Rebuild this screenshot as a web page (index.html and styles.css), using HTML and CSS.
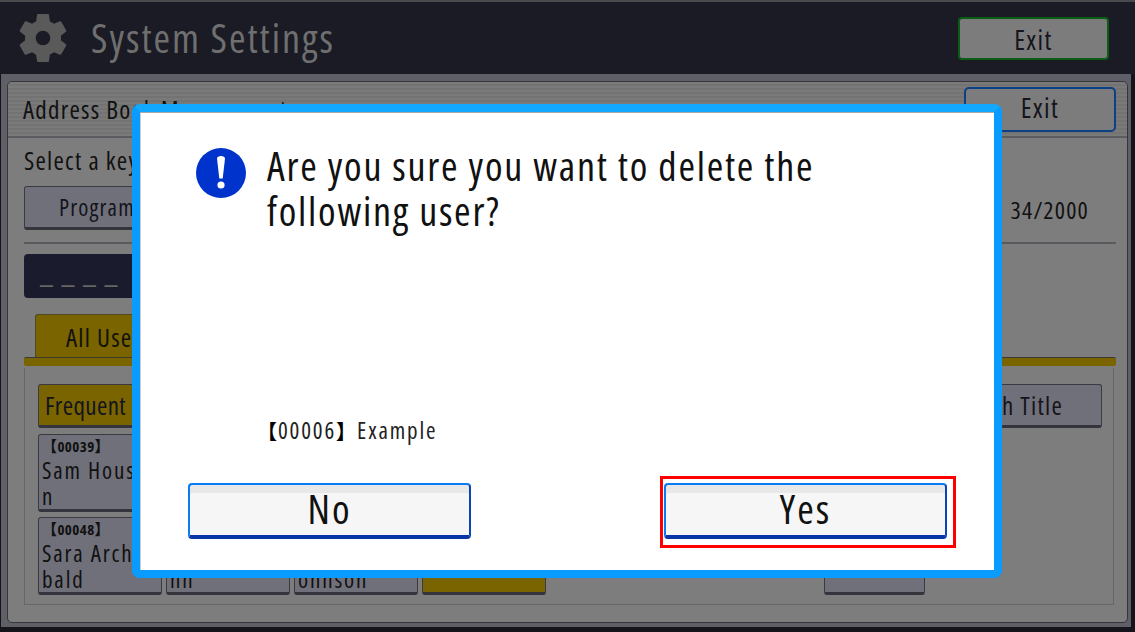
FILE: index.html
```html
<!DOCTYPE html>
<html lang="en">
<head>
  <meta charset="UTF-8">
  <title>System Settings</title>
  <link rel="stylesheet" href="styles.css">
</head>
<body>

  <header class="topbar">
    <svg class="gear" viewBox="0 0 24 24"><path fill-rule="evenodd" d="M19.14 12.94c.04-.3.06-.61.06-.94 0-.32-.02-.64-.07-.94l2.03-1.58c.18-.14.23-.41.12-.61l-1.92-3.32c-.12-.22-.37-.29-.59-.22l-2.39.96c-.5-.38-1.03-.7-1.62-.94l-.36-2.54c-.04-.24-.24-.41-.48-.41h-3.84c-.24 0-.43.17-.47.41l-.36 2.54c-.59.24-1.13.57-1.62.94l-2.39-.96c-.22-.08-.47 0-.59.22L2.74 8.87c-.12.21-.08.47.12.61l2.03 1.58c-.05.3-.09.63-.09.94s.02.64.07.94l-2.03 1.58c-.18.14-.23.41-.12.61l1.92 3.32c.12.22.37.29.59.22l2.39-.96c.5.38 1.03.7 1.62.94l.36 2.54c.05.24.24.41.48.41h3.84c.24 0 .44-.17.47-.41l.36-2.54c.59-.24 1.13-.56 1.62-.94l2.39.96c.22.08.47 0 .59-.22l1.92-3.32c.12-.22.07-.47-.12-.61l-2.01-1.58zM12 14.9c-1.6 0-2.9-1.3-2.9-2.9s1.3-2.9 2.9-2.9 2.9 1.3 2.9 2.9-1.3 2.9-2.9 2.9z"/></svg>
    <span class="app-title">System Settings</span>
    <button class="btn exit-top">Exit</button>
  </header>

  <div class="frame">
    <main class="panel">
      <div class="panel-head">
        <span>Address Book Management</span>
        <button class="btn exit-blue">Exit</button>
      </div>

      <div class="panel-body">
        <p class="hint">Select a key</p>
        <div class="program-row">
          <button class="btn program">Program</button>
          <span class="counter">34/2000</span>
        </div>
        <div class="rule"></div>
        <div class="search">_ _ _ _</div>

        <div class="tabs"><span class="tab">All Users</span></div>
        <div class="tab-line"></div>

        <section class="list-box">
          <div class="list-top">
            <button class="btn frequent">Frequent</button>
            <button class="btn search-title">Search Title</button>
          </div>
          <div class="list-row">
            <div class="cards">
              <div class="card"><b>【00039】</b>Sam Housto<br>n</div>
              <div class="card"></div>
              <div class="card"></div>
              <div class="card"></div>
              <div class="card"><b>【00048】</b>Sara Archi<br>bald</div>
              <div class="card"><b></b><br>nn</div>
              <div class="card"><b></b><br>ohnson</div>
              <div class="card card-on"></div>
            </div>
            <button class="btn page-btn"></button>
          </div>
        </section>
      </div>
    </main>
  </div>

  <div class="dialog">
    <div class="dialog-msg">
      <svg class="alert" viewBox="0 0 50 50">
        <circle cx="25" cy="25" r="25" fill="#0033cc"/>
        <path d="M21 10.5c0-1.6 1.6-2.5 4-2.5s4 .9 4 2.5l-2.3 20h-3.4z" fill="#fff"/>
        <circle cx="25" cy="37" r="3.6" fill="#fff"/>
      </svg>
      <p>Are you sure you want to delete the<br>following user?</p>
    </div>
    <p class="dialog-user"><span class="bracket">【</span>00006<span class="bracket">】</span>Example</p>
    <div class="dialog-actions">
      <button class="dlg-btn dlg-no">No</button>
      <div class="yes-wrap"><button class="dlg-btn">Yes</button></div>
    </div>
  </div>

</body>
</html>
```

FILE: styles.css
```css
html, body {
  margin: 0;
  height: 632px;
  overflow: hidden;
}

body {
  position: relative;
  background: #14141a;
  font-family: "Open Sans", "Noto Sans CJK JP", sans-serif;
  font-stretch: 75%;
  color: #111;
}

/* the panel font is narrow but widely spaced */
body * {
  letter-spacing: .05em;
}

p {
  margin: 0;
}

.btn {
  display: block;
  padding: 0;
  font: inherit;
  color: #14141c;
  background: #70707a;
  border: 1px solid #3a3a42;
  border-bottom: 3px solid #34343c;
  border-radius: 3px;
}

/* top bar */
.topbar {
  box-sizing: border-box;
  height: 74px;
  display: flex;
  align-items: center;
  background: #1a1b24;
  border-top: 2px solid #4a4a4e;
  padding: 0 26px 0 13px;
}

.gear {
  width: 60px;
  height: 60px;
  fill: #5a5a5a;
}

.app-title {
  margin-left: 18px;
  padding-bottom: 2px;
  font-size: 40px;
  color: #6f6f6f;
}

.exit-top {
  margin-left: auto;
  width: 151px;
  height: 43px;
  padding-top: 3px;
  font-size: 27px;
  line-height: 36px;
  background: #7c7c7c;
  border: 2px solid #0b5c14;
  border-radius: 4px;
}

/* main panel */
.frame {
  box-sizing: border-box;
  height: 553px;
  margin: 0 4px 0 1px;
  padding: 7px 3px 4px 6px;
  background: #5f5f68;
}

.panel {
  box-sizing: border-box;
  height: 542px;
  background: #7d7d7d;
  border: 1px solid #35353a;
  border-radius: 5px;
  font-size: 25px;
}

.panel-head {
  box-sizing: border-box;
  height: 56px;
  display: flex;
  align-items: center;
  justify-content: space-between;
  padding: 0 11px 0 15px;
  border-bottom: 2px solid #5c5c60;
  background: repeating-linear-gradient(#7a7a7a 0 2px, #737373 2px 4px);
  border-radius: 5px 5px 0 0;
}

.exit-blue {
  width: 152px;
  height: 45px;
  padding-bottom: 3px;
  font-size: 27px;
  line-height: 36px;
  background: #7c7c7c;
  border: 2px solid #0b3f86;
  border-radius: 5px;
}

.panel-body {
  box-sizing: border-box;
  height: 483px;
  padding: 7px 11px 0 16px;
}

.hint {
  height: 41px;
  line-height: 30px;
}

.program-row {
  display: flex;
  justify-content: space-between;
  align-items: flex-end;
  height: 44px;
}

.program {
  width: 220px;
  height: 44px;
  font-size: 23px;
  text-align: left;
  padding-left: 34px;
}

.counter {
  margin: 0 27px -2px 0;
  font-size: 24px;
  line-height: 44px;
}

.rule {
  height: 2px;
  margin-top: 12px;
  background: #5a5a5e;
}

.search {
  box-sizing: border-box;
  width: 240px;
  height: 44px;
  margin-top: 10px;
  padding-left: 16px;
  font-size: 30px;
  line-height: 36px;
  color: #666;
  background: #1a1b2c;
  border-radius: 4px;
}

.tabs {
  display: flex;
  height: 43px;
  margin-top: 16px;
  padding-left: 11px;
}

.tab {
  width: 190px;
  padding-left: 30px;
  line-height: 44px;
  background: #7a6400;
  border: 1px solid #4e4a20;
  border-bottom: 0;
  border-radius: 3px 3px 0 0;
}

.tab-line {
  height: 8px;
  background: #7a6400;
  border-top: 1px solid #3a3a30;
  border-radius: 2px;
}

.list-box {
  box-sizing: border-box;
  height: 237px;
  margin-top: 2px;
  margin-right: 2px;
  padding: 16px 11px 0 13px;
  border: 1px solid #66666a;
  border-top: 0;
}

.list-top {
  display: flex;
  justify-content: space-between;
  height: 44px;
}

.frequent {
  width: 200px;
  height: 44px;
  background: #7a6400;
  text-align: left;
  padding-left: 6px;
  letter-spacing: .4px;
}

.search-title {
  width: 200px;
  height: 44px;
  text-align: right;
  padding-right: 38px;
}

.list-row {
  display: flex;
  align-items: flex-end;
  margin-top: 6px;
  height: 161px;
}

.cards {
  display: grid;
  grid-template-columns: repeat(4, 124px);
  grid-auto-rows: 78px;
  gap: 5px 4px;
  font-size: 23px;
  line-height: 26px;
}

.card {
  box-sizing: border-box;
  overflow: hidden;
  padding: 0 3px;
  background: #70707a;
  border: 1px solid #3a3a42;
  border-bottom: 3px solid #34343c;
  border-radius: 3px;
  white-space: nowrap;
  letter-spacing: .08em;
}

.card b {
  display: block;
  height: 22px;
  font-size: 15px;
  line-height: 22px;
  letter-spacing: .4px;
}

.card-on {
  background: #7a6400;
}

.page-btn {
  width: 101px;
  height: 44px;
  margin-left: 278px;
}

/* dialog over everything */
.dialog {
  position: absolute;
  left: 132px;
  top: 104px;
  box-sizing: border-box;
  width: 870px;
  height: 474px;
  display: flex;
  flex-direction: column;
  background: #fff;
  border: 8px solid #0a9bff;
  border-top-color: #12a8ff;
  border-radius: 8px;
  box-shadow: inset 0 1px 0 #aaa, inset 1px 0 0 #ccc;
  padding: 36px 38px 0 48px;
}

.dialog-msg {
  display: flex;
  align-items: flex-start;
  height: 264px;
}

.alert {
  flex: none;
  width: 50px;
  height: 50px;
  margin: 0 21px 0 8px;
}

.dialog-msg p {
  margin-top: -5px;
  font-size: 40px;
  line-height: 45px;
  letter-spacing: .044em;
  white-space: nowrap;
}

.dialog-user {
  margin-left: 69px;
  height: 64px;
  font-size: 23px;
  line-height: 36px;
  letter-spacing: .08em;
  color: #222;
}

.bracket {
  font-size: 20px;
  font-weight: 700;
  color: #000;
}

.dialog-actions {
  display: flex;
  justify-content: space-between;
  align-items: flex-start;
}

.dlg-no {
  margin-top: 7px;
}

.yes-wrap {
  box-sizing: border-box;
  width: 296px;
  height: 72px;
  padding: 4px 6px 4px 1px;
  border: 3px solid #f00;
}

.dlg-btn {
  display: block;
  box-sizing: border-box;
  width: 283px;
  height: 56px;
  padding: 0 0 2px;
  font: inherit;
  font-size: 40px;
  line-height: 40px;
  color: #111;
  background: #f6f6f6;
  border: 2px solid #0a7bf0;
  border-bottom: 4px solid #0a35a8;
  border-right-color: #0a45b8;
  border-radius: 4px;
  box-shadow: inset 0 8px 0 #e8e8e8;
}
```
